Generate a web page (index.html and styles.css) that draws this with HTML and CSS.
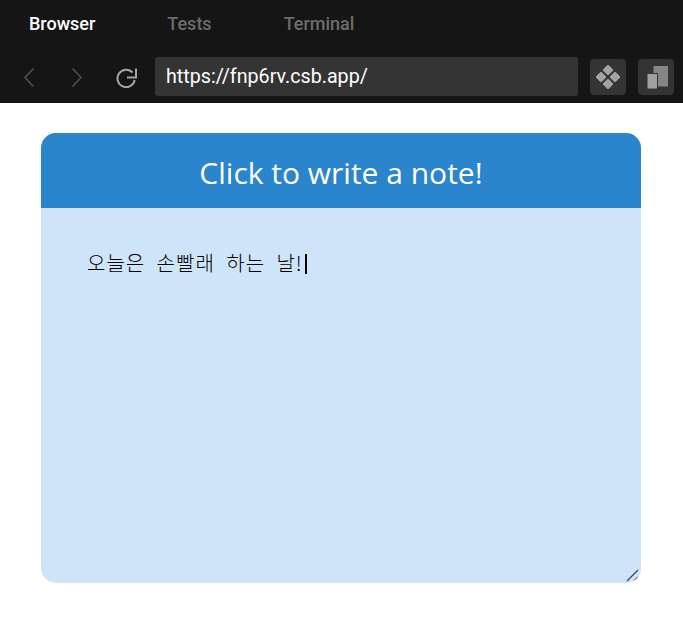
FILE: index.html
```html
<!DOCTYPE html>
<html>
<head>
<meta charset="utf-8" />
<title>Note</title>
	<link rel="stylesheet" href="styles.css">
</head>

<body>
	<div class="toolbar">
		<div class="tabs">
			<span class="tab active">Browser</span>
			<span class="tab">Tests</span>
			<span class="tab">Terminal</span>
		</div>
		<div class="navrow">
			<svg class="navicon" width="16" height="24" viewBox="0 0 16 24"><path d="M12.500 3.500 4 12.500l8.500 9" fill="none" stroke="#4d4d4d" stroke-width="1.700"/></svg>
			<svg class="navicon next" width="16" height="24" viewBox="0 0 16 24"><path d="M3.500 3.500 12 12.500l-8.500 9" fill="none" stroke="#4d4d4d" stroke-width="1.700"/></svg>
			<svg class="navicon reload" width="22" height="24" viewBox="0 0 22 24"><path d="M16.600 7.500A8.700 8.700 0 1 0 18.700 15" fill="none" stroke="#a3a3a3" stroke-width="2"/><path d="M20 3.500v9h-9" fill="none" stroke="#a3a3a3" stroke-width="2"/></svg>
			<div class="urlbar">https://fnp6rv.csb.app/</div>
			<div class="iconbtn">
				<svg width="24" height="24" viewBox="0 0 24 24" fill="#a3a3a3">
					<rect x="8" y="1" width="8" height="8" rx="1.500" transform="rotate(45 12 5)"/>
					<rect x="8" y="15" width="8" height="8" rx="1.500" transform="rotate(45 12 19)"/>
					<rect x="1" y="8" width="8" height="8" rx="1.500" transform="rotate(45 5 12)"/>
					<rect x="15" y="8" width="8" height="8" rx="1.500" transform="rotate(45 19 12)"/>
				</svg>
			</div>
			<div class="iconbtn">
				<svg width="24" height="24" viewBox="0 0 24 24">
					<rect x="9.500" y="1" width="14.500" height="20.500" fill="#858585"/>
					<rect x="3" y="8.500" width="10.500" height="15.500" fill="#a0a0a0" stroke="#343434" stroke-width="1"/>
				</svg>
			</div>
		</div>
	</div>

	<div class="page">
		<div class="note">
			<div class="note-title">Click to write a note!</div>
			<div class="note-body">오늘은 손빨래 하는 날!<span class="caret"></span></div>
			<svg class="grip" width="14" height="14" viewBox="0 0 14 14"><path d="M1 13 12 2M8 13l4-4" fill="none" stroke="#3b4660" stroke-width="1.300"/></svg>
		</div>
	</div>
</body>
</html>
```

FILE: styles.css
```css
body {
	margin: 0;
	background-color: #fff;
	font-family: Roboto, "Noto Sans CJK KR", sans-serif;
}

.toolbar {
	height: 103px;
	background-color: #151515;
}
.tabs {
	display: flex;
	height: 47px;
	padding-left: 29px;
	align-items: center;
	gap: 72px;
}
.tab {
	font-size: 18px;
	font-weight: 500;
	color: #6c6c6c;
}
.tab.active {
	color: #fff;
}
.navrow {
	display: flex;
	align-items: center;
	height: 39px;
	margin-top: 10px;
	padding-left: 21px;
}
.navicon {
	flex: none;
}
.navicon.next {
	margin-left: 32px;
}
.navicon.reload {
	margin-left: 31px;
}
.urlbar {
	width: 423px;
	height: 39px;
	margin-left: 17px;
	padding-left: 11px;
	box-sizing: border-box;
	background-color: #343434;
	border-radius: 3px;
	color: #fff;
	font-size: 19.700px;
	line-height: 39px;
}
.iconbtn {
	display: flex;
	align-items: center;
	justify-content: center;
	width: 36px;
	height: 36px;
	margin-left: 12px;
	background-color: #343434;
	border-radius: 4px;
}

.page {
	padding: 30px 42px 0 41px;
}
.note {
	position: relative;
	height: 450px;
	background-color: #cee4f9;
	border-radius: 15px;
	overflow: hidden;
}
.note-title {
	height: 75px;
	background-color: #2a85cd;
	color: #fff;
	font-family: "Open Sans", sans-serif;
	font-size: 30px;
	line-height: 80px;
	text-align: center;
}
.note-body {
	padding: 40px 46px;
	color: #000;
	font-family: "Noto Sans CJK KR", sans-serif;
	font-size: 20px;
	font-weight: 300;
	line-height: 30px;
	letter-spacing: 1px;
	word-spacing: 6px;
}
.caret {
	display: inline-block;
	width: 2px;
	height: 20px;
	margin-left: 2px;
	background-color: #000;
	vertical-align: -3px;
}
.grip {
	position: absolute;
	right: 1px;
	bottom: 1px;
}
```
